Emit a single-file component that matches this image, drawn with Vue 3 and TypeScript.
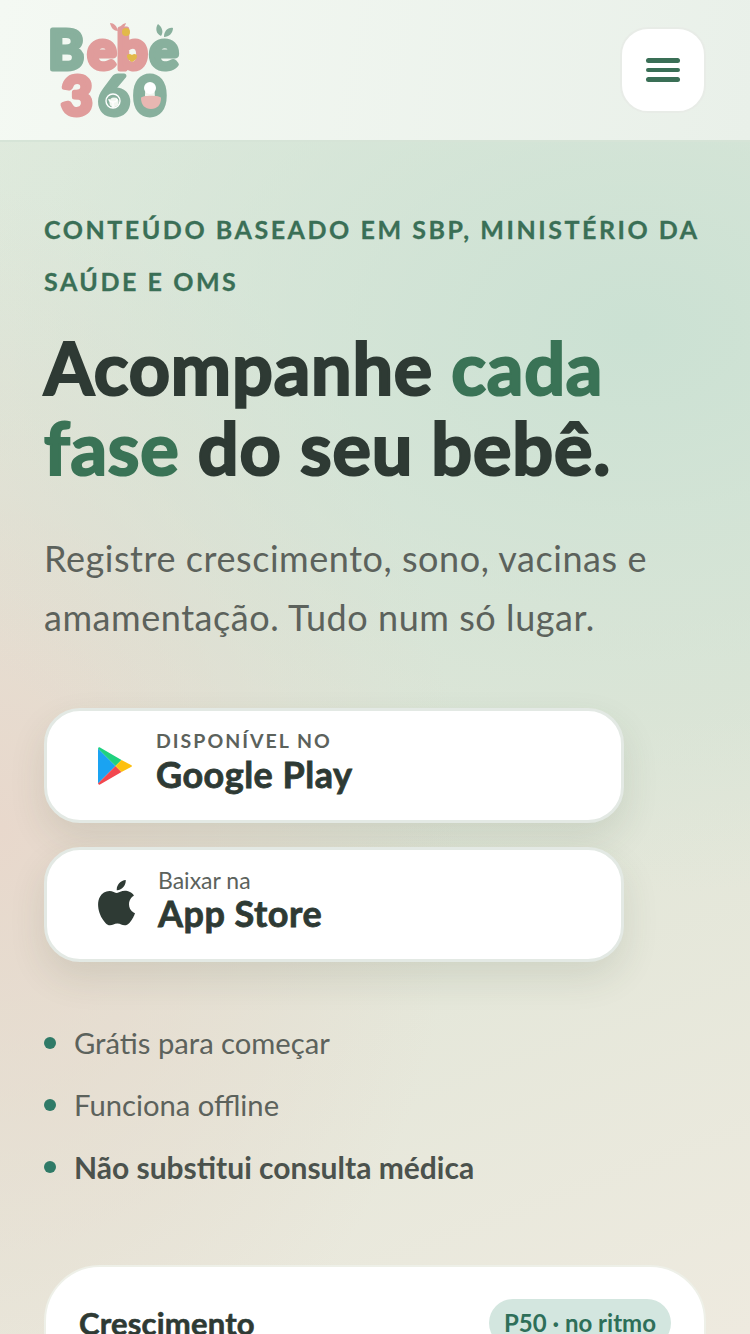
<script setup lang="ts">
const perks: { text: string; strong?: boolean }[] = [
  { text: 'Grátis para começar' },
  { text: 'Funciona offline' },
  { text: 'Não substitui consulta médica', strong: true },
]
</script>

<template>
  <div class="page">
    <header class="topbar">
      <svg class="logo" viewBox="0 0 140 104" aria-label="Bebê 360">
        <g class="logo-word">
          <text x="22" y="51" class="sage">B</text>
          <text x="58" y="51" class="pink">e</text>
          <text x="88" y="51" class="pink">b</text>
          <text x="120" y="51" class="sage">e</text>
          <text x="33" y="97" class="pink">3</text>
          <text x="70" y="97" class="sage">6</text>
          <text x="106" y="97" class="sage">0</text>
        </g>
        <path d="M74 13c-4 0-7-3-8-8 4 0 7 3 8 8zM74 13c1-4 4-7 8-8-1 4-4 7-8 8z" fill="#e09c9b" />
        <circle cx="82" cy="14" r="4" fill="#e2b94a" />
        <path d="M88 44c-3-2-5-3-5-6 0-2 3-3 5-1 2-2 5-1 5 1 0 3-2 4-5 6z" fill="#e2b94a" />
        <path d="M117 18c-5-2-6-8-3-12 4 3 6 8 3 12zM120 19c0-6 4-10 9-9 0 5-4 9-9 9z" fill="#88b09d" />
        <circle cx="106" cy="70" r="6" fill="#fff" />
        <path d="M97 80c0-3 20-3 20 0 0 7-4 11-10 11s-10-4-10-11z" fill="#e8b7b2" />
        <circle cx="69" cy="83" r="7" fill="none" stroke="#fff" stroke-width="1.4" />
        <path d="M69 90v-6M69 84c-3 0-4-1-4-3M69 84c3 0 4-1 4-3" fill="none" stroke="#fff" stroke-width="1.4" />
      </svg>
      <button class="menu" type="button" aria-label="Menu">
        <span></span><span></span><span></span>
      </button>
    </header>

    <main class="hero">
      <p class="eyebrow">CONTEÚDO BASEADO EM SBP, MINISTÉRIO DA SAÚDE E OMS</p>
      <h1 class="headline">Acompanhe <em>cada fase</em> do seu bebê.</h1>
      <p class="lead">Registre crescimento, sono, vacinas e amamentação. Tudo num só lugar.</p>

      <div class="stores">
        <a class="store">
          <svg class="store-icon play" viewBox="0 0 36 38">
            <path d="M1 1.5v35L18.5 19z" fill="#1aa3f2" />
            <path d="M1 1.5 18.5 19l6-6L3 .6C2 0 1.300 .6 1 1.500z" fill="#1fd17f" />
            <path d="M1 36.500 18.500 19l6 6L3 37.400c-1 .6-1.700 0-2-.9z" fill="#f2474f" />
            <path d="m24.500 13 9.500 5c1.300.7 1.300 1.300 0 2l-9.500 5-6-6z" fill="#fdc010" />
          </svg>
          <span class="store-text">
            <small class="caps">DISPONÍVEL NO</small>
            <strong>Google Play</strong>
          </span>
        </a>
        <a class="store">
          <svg class="store-icon apple-icon" viewBox="3 3 33 40">
            <path fill="#2e3a34" d="M31 24.500c0-5 4-7.300 4.200-7.500-2.300-3.300-5.800-3.800-7.100-3.900-3-.3-5.900 1.800-7.400 1.800s-3.900-1.800-6.400-1.700c-3.300 0-6.300 1.900-8 4.800-3.400 5.900-.9 14.700 2.400 19.500 1.600 2.400 3.600 5 6.100 4.900 2.400-.1 3.400-1.600 6.300-1.600s3.800 1.600 6.400 1.500c2.700 0 4.300-2.400 5.900-4.700 1.900-2.700 2.600-5.300 2.700-5.500-.1 0-5.100-2-5.100-7.600zM26.200 9.900c1.300-1.600 2.200-3.900 2-6.100-1.900.1-4.200 1.300-5.600 2.900-1.200 1.400-2.300 3.700-2 5.900 2.200.1 4.300-1.100 5.600-2.700z" />
          </svg>
          <span class="store-text">
            <small>Baixar na</small>
            <strong>App Store</strong>
          </span>
        </a>
      </div>

      <ul class="perks">
        <li v-for="perk in perks" :key="perk.text" :class="{ strong: perk.strong }">{{ perk.text }}</li>
      </ul>

      <section class="card">
        <div class="card-head">
          <h2>Crescimento</h2>
          <span class="pill">P50 · no ritmo</span>
        </div>
      </section>
    </main>
  </div>
</template>

<style>
html, body { margin: 0; padding: 0; }
</style>

<style scoped>
.page {
  height: 1334px;
  overflow: hidden;
  box-sizing: border-box;
  font-family: Lato, "Noto Sans", sans-serif;
  color: #2e3a34;
  background:
    radial-gradient(800px 560px at 85% 25%, #cbe1d3 0%, rgba(203, 225, 211, 0) 100%),
    radial-gradient(460px 640px at 0% 62%, #e8d8cc 0%, rgba(232, 216, 204, 0) 100%),
    linear-gradient(160deg, #e2ecdf 0%, #e1e6d8 60%, #eeeadf 100%);
}
.topbar {
  height: 142px;
  box-sizing: border-box;
  padding: 0 44px;
  display: flex;
  align-items: center;
  justify-content: space-between;
  background: linear-gradient(100deg, #f4f9f3 0%, #e9f0e9 100%);
  border-bottom: 2px solid #d6e4d7;
}
.logo { width: 140px; height: 104px; overflow: visible; }
.logo-word text {
  font-family: Lato, sans-serif;
  font-weight: 700;
  font-size: 54px;
  text-anchor: middle;
  stroke-width: 5px;
  stroke-linejoin: round;
}
.sage { fill: #88b09d; stroke: #88b09d; }
.pink { fill: #e09c9b; stroke: #e09c9b; }
.menu {
  width: 86px;
  height: 86px;
  padding: 0;
  box-sizing: border-box;
  border: 2px solid #e8ece7;
  border-radius: 28px;
  background: #fff;
  display: flex;
  flex-direction: column;
  align-items: center;
  justify-content: center;
  gap: 5px;
}
.menu span {
  width: 34px;
  height: 4.500px;
  border-radius: 3px;
  background: #3a6f56;
}
.hero { padding: 0 44px; }
.eyebrow {
  margin: 61px 0 0;
  font-size: 25px;
  font-weight: 700;
  line-height: 52px;
  letter-spacing: 2.550px;
  color: #3a6f56;
  -webkit-text-stroke: 0.3px currentColor;
}
.headline {
  margin: 20px 0 0;
  font-size: 72px;
  font-weight: 700;
  line-height: 80px;
  letter-spacing: 0.8px;
  color: #2e3a34;
  -webkit-text-stroke: 2.200px currentColor;
}
.headline em { font-style: normal; color: #3a7356; }
.lead {
  margin: 42px 0 0;
  font-size: 36px;
  line-height: 59px;
  letter-spacing: 0.55px;
  color: #5c625c;
}
.stores {
  margin-top: 61px;
  width: 580px;
  display: flex;
  flex-direction: column;
  gap: 24px;
}
.store {
  height: 115px;
  box-sizing: border-box;
  padding-left: 49px;
  display: flex;
  align-items: center;
  gap: 23px;
  background: #fff;
  border: 3px solid #e3e9e4;
  border-radius: 36px;
  box-shadow: 0 16px 36px rgba(60, 70, 50, 0.12);
}
.store-icon { flex: none; }
.play { width: 36px; height: 38px; margin-left: 1px; }
.apple-icon { width: 39px; height: 47px; margin-bottom: 4px; }
.store-text { display: flex; flex-direction: column; line-height: 1; padding-bottom: 9px; }
.store-text small { font-size: 23px; color: #5c625c; line-height: 26px; }
.store-text small.caps { font-weight: 700; letter-spacing: 2px; font-size: 19.500px; }
.store-text strong {
  font-size: 36px;
  font-weight: 700;
  letter-spacing: 0.5px;
  color: #2e3a34;
  line-height: 40px;
  -webkit-text-stroke: 0.8px currentColor;
}
.perks {
  list-style: none;
  margin: 61px 0 0;
  padding: 0;
  display: flex;
  flex-direction: column;
  gap: 22px;
}
.perks li {
  display: flex;
  align-items: center;
  gap: 18px;
  font-size: 29.200px;
  line-height: 40px;
  color: #5c625c;
}
.perks li::before {
  content: "";
  width: 12px;
  height: 12px;
  border-radius: 50%;
  background: #2f7a67;
}
.perks li.strong { font-size: 30px; font-weight: 700; color: #4b524d; }
.card {
  margin-top: 78px;
  height: 300px;
  box-sizing: border-box;
  padding: 32px 33px;
  background: #fff;
  border: 2px solid #eef0e8;
  border-radius: 56px;
}
.card-head {
  display: flex;
  align-items: center;
  justify-content: space-between;
}
.card-head h2 {
  margin: 0;
  font-size: 31px;
  font-weight: 700;
  letter-spacing: 0.2px;
  color: #2e3a34;
  -webkit-text-stroke: 0.6px currentColor;
}
.pill {
  padding: 5px 15px;
  border-radius: 999px;
  background: #d3e6df;
  font-size: 24px;
  font-weight: 700;
  line-height: 38px;
  color: #2e6f59;
}
</style>
